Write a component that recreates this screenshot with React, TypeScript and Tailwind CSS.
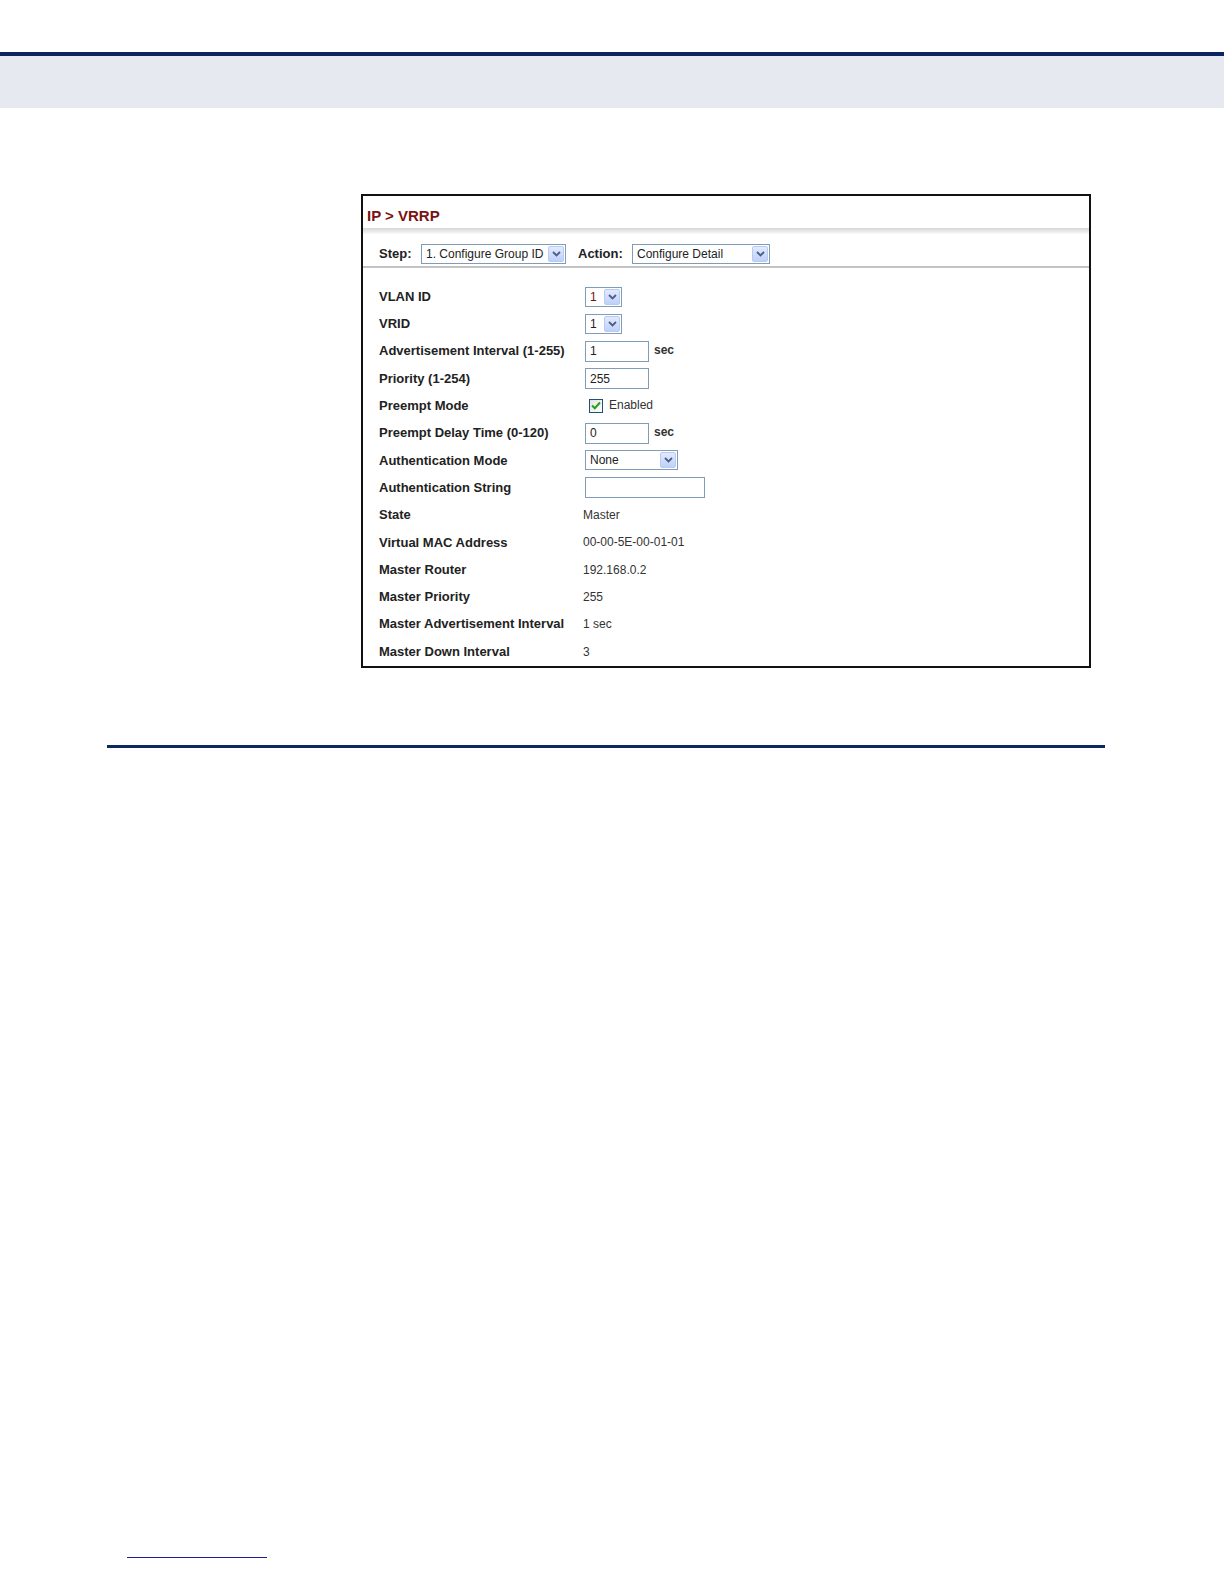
import React from 'react';

const font = { fontFamily: '"Liberation Sans", Arial, sans-serif' };

// Small arrow button used by all the dropdowns
const ArrowBox: React.FC = () => (
  <span className="flex items-center justify-center w-[16px] h-[16px] border border-[#b9cbf3] bg-gradient-to-b from-[#e1eafe] to-[#bfd0f8] rounded-[2px]">
    <svg width="9" height="6" viewBox="0 0 9 6">
      <path d="M1 1 L4.5 4.5 L8 1" fill="none" stroke="#4b5f86" strokeWidth="1.8" />
    </svg>
  </span>
);

interface SelectProps {
  value: string;
  width: string;
  valueClass?: string;
}

const FakeSelect: React.FC<SelectProps> = ({ value, width, valueClass }) => (
  <div className={`${width} h-[20px] border border-[#7f9db9] bg-white flex items-center justify-between pl-[4px] pr-[1px]`}>
    <span className={`text-[12px] leading-none ${valueClass || 'text-[#222]'}`}>{value}</span>
    <ArrowBox />
  </div>
);

const TextBox: React.FC<{ value?: string; width: string }> = ({ value, width }) => (
  <div className={`${width} h-[21px] border border-[#7f9db9] bg-white flex items-center pl-[4px]`}>
    <span className="text-[12px] leading-none text-[#222]">{value}</span>
  </div>
);

const Row: React.FC<{ label: string; children: React.ReactNode }> = ({ label, children }) => (
  <div className="flex items-center h-[27.3px]">
    <div className="w-[206px] text-[13px] font-bold text-[#222]">{label}</div>
    <div className="flex items-center">{children}</div>
  </div>
);

const Value: React.FC<{ text: string }> = ({ text }) => (
  <span className="text-[12px] text-[#333] -ml-[2px]">{text}</span>
);

export default function App() {
  return (
    <div className="w-[1224px] h-[1584px] bg-white relative" style={font}>
      {/* header band */}
      <div className="h-[52px]" />
      <div className="h-[4px] bg-[#0c2461]" />
      <div className="h-[52px] bg-[#e6e9f0]" />

      {/* VRRP panel */}
      <div className="pt-[86px] pl-[361px]">
        <div className="w-[730px] h-[474px] border-2 border-[#111] bg-white flex flex-col">
          <div className="h-[32px] pl-[4px] pt-[8px]">
            <span className="text-[15px] leading-[18px] font-bold text-[#7a1212]">IP &gt; VRRP</span>
          </div>
          <div className="h-[6px] bg-gradient-to-b from-[#d6d6d6] to-[#fafafa]" />
          <div className="h-[34px] flex items-center pl-[16px] pt-[7px] border-b-2 border-[#c4c4c4]">
            <span className="text-[13px] font-bold text-[#222] w-[42px]">Step:</span>
            <FakeSelect value="1. Configure Group ID" width="w-[145px]" />
            <span className="text-[13px] font-bold text-[#222] ml-[12px] w-[54px]">Action:</span>
            <FakeSelect value="Configure Detail" width="w-[138px]" />
          </div>

          <div className="pl-[16px] pt-[15px]">
            <Row label="VLAN ID">
              <FakeSelect value="1" width="w-[37px]" valueClass="text-[#6b1414]" />
            </Row>
            <Row label="VRID">
              <FakeSelect value="1" width="w-[37px]" />
            </Row>
            <Row label="Advertisement Interval (1-255)">
              <TextBox value="1" width="w-[64px]" />
              <span className="text-[12px] font-bold text-[#333] ml-[5px] -mt-[3px]">sec</span>
            </Row>
            <Row label="Priority (1-254)">
              <TextBox value="255" width="w-[64px]" />
            </Row>
            <Row label="Preempt Mode">
              <span className="ml-[4px] w-[14px] h-[14px] border border-[#1c5180] bg-gradient-to-br from-[#e4e4e0] to-white flex items-center justify-center">
                <svg width="10" height="9" viewBox="0 0 10 9">
                  <path d="M1 4.5 L3.8 7.2 L9 1.5" fill="none" stroke="#21a121" strokeWidth="2" />
                </svg>
              </span>
              <span className="text-[12px] text-[#333] ml-[6px] -mt-[2px]">Enabled</span>
            </Row>
            <Row label="Preempt Delay Time (0-120)">
              <TextBox value="0" width="w-[64px]" />
              <span className="text-[12px] font-bold text-[#333] ml-[5px] -mt-[3px]">sec</span>
            </Row>
            <Row label="Authentication Mode">
              <FakeSelect value="None" width="w-[93px]" />
            </Row>
            <Row label="Authentication String">
              <TextBox width="w-[120px]" />
            </Row>
            <Row label="State">
              <Value text="Master" />
            </Row>
            <Row label="Virtual MAC Address">
              <Value text="00-00-5E-00-01-01" />
            </Row>
            <Row label="Master Router">
              <Value text="192.168.0.2" />
            </Row>
            <Row label="Master Priority">
              <Value text="255" />
            </Row>
            <Row label="Master Advertisement Interval">
              <Value text="1 sec" />
            </Row>
            <Row label="Master Down Interval">
              <Value text="3" />
            </Row>
          </div>
        </div>
      </div>

      {/* section rule */}
      <div className="mt-[77px] ml-[107px] w-[998px] h-[3px] bg-[#0c2a5c]" />

      {/* footnote rule */}
      <div className="mt-[809px] ml-[127px] w-[140px] h-[1px] bg-[#1a1f8a]" />
    </div>
  );
}
